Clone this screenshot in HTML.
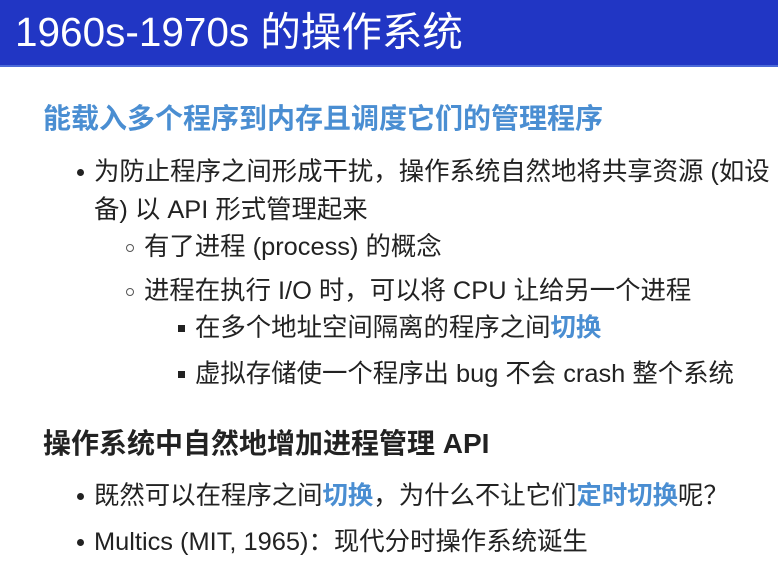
<!DOCTYPE html>
<html><head><meta charset="utf-8"><style>
body{margin:0;width:778px;height:574px;background:#fff;overflow:hidden;position:relative;font-family:"Liberation Sans","Noto Sans CJK SC",sans-serif;color:#222;}
.hdr{position:absolute;left:0;top:0;width:778px;height:65px;background:#2136c4;border-bottom:2px solid #4b6ad8;}
.hdr div{position:absolute;left:15px;top:8px;color:#fff;font-size:40.5px;line-height:48px;white-space:nowrap;}
.l{position:absolute;white-space:nowrap;font-size:25.4px;line-height:30px;}
.h{font-weight:bold;font-size:28px;}
.b{color:#4a8ed2;font-weight:bold;}
.d{position:absolute;width:7px;height:7px;border-radius:50%;background:#222;}
.c{position:absolute;border-radius:50%;border:1px solid #555;box-sizing:border-box;width:8px;height:8px;}
.s{position:absolute;width:7px;height:7px;background:#222;}
</style></head><body>
<div class="hdr"><div>1960s-1970s 的操作系统</div></div>
<div class="l h b" style="left:43px;top:104px;color:#4a8ed2">能载入多个程序到内存且调度它们的管理程序</div>
<div class="d" style="left:77px;top:169px"></div>
<div class="l" style="left:94px;top:157px">为防止程序之间形成干扰，操作系统自然地将共享资源 (如设</div>
<div class="l" style="left:94px;top:195px">备) 以 API 形式管理起来</div>
<div class="c" style="left:126px;top:244px"></div>
<div class="l" style="left:144px;top:232px">有了进程 (process) 的概念</div>
<div class="c" style="left:126px;top:288px"></div>
<div class="l" style="left:144px;top:276px">进程在执行 I/O 时，可以将 CPU 让给另一个进程</div>
<div class="s" style="left:178px;top:325px"></div>
<div class="l" style="left:195px;top:313px">在多个地址空间隔离的程序之间<span class="b">切换</span></div>
<div class="s" style="left:178px;top:371px"></div>
<div class="l" style="left:195px;top:359px">虚拟存储使一个程序出 bug 不会 crash 整个系统</div>
<div class="l h" style="left:43px;top:429px">操作系统中自然地增加进程管理 API</div>
<div class="d" style="left:77px;top:493px"></div>
<div class="l" style="left:94px;top:481px">既然可以在程序之间<span class="b">切换</span>，为什么不让它们<span class="b">定时切换</span>呢？</div>
<div class="d" style="left:77px;top:539px"></div>
<div class="l" style="left:94px;top:527px">Multics (MIT, 1965)：现代分时操作系统诞生</div>
</body></html>
